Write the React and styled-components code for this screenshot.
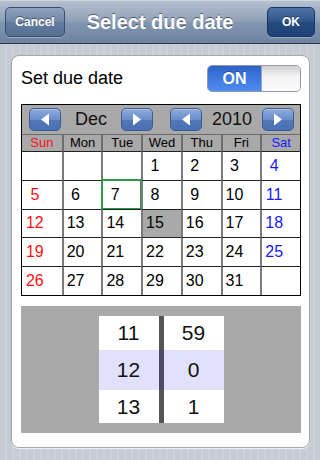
import React from "react";
import styled, { createGlobalStyle, css } from "styled-components";

const Global = createGlobalStyle`
  html, body { margin: 0; padding: 0; }
  body {
    width: 320px;
    height: 460px;
    overflow: hidden;
    font-family: "Liberation Sans", Arial, Helvetica, sans-serif;
    background: repeating-linear-gradient(90deg, #c5ccd4 0 5px, #cbd2d9 5px 7px);
  }
  * { box-sizing: border-box; }
`;

const Screen = styled.div`
  width: 320px;
  height: 460px;
  display: flex;
  flex-direction: column;
`;

const NavBar = styled.div`
  height: 44px;
  flex: none;
  display: flex;
  align-items: center;
  justify-content: space-between;
  padding: 0 5px;
  background: linear-gradient(#b5c0d0 0%, #8d9fb6 50%, #8297b0 50%, #6d83a1 100%);
  border-top: 1px solid #cdd5df;
  border-bottom: 1px solid #2d3642;
  position: relative;
`;

const NavButton = styled.button`
  height: 30px;
  padding: 0;
  width: ${(p) => p.$w}px;
  border-radius: 5px;
  border: 1px solid #3a4f6e;
  color: #fff;
  font-family: inherit;
  font-weight: bold;
  font-size: 12px;
  text-shadow: 0 -1px 0 rgba(0, 0, 0, 0.45);
  box-shadow: 0 1px 0 rgba(255, 255, 255, 0.3);
  background: ${(p) =>
    p.$primary
      ? "linear-gradient(#4f73a6 0%, #2f5489 50%, #234a80 50%, #1f4379 100%)"
      : "linear-gradient(#8fa2bb 0%, #6f86a6 50%, #627b9d 50%, #567096 100%)"};
  border-color: ${(p) => (p.$primary ? "#1c355b" : "#3a4f6e")};
`;

const Title = styled.div`
  position: absolute;
  left: 0;
  right: 0;
  top: 0;
  bottom: 0;
  display: flex;
  align-items: center;
  justify-content: center;
  pointer-events: none;
  color: #fff;
  font-weight: bold;
  font-size: 20px;
  text-shadow: 0 -1px 0 rgba(0, 0, 0, 0.5);
`;

const Content = styled.div`
  padding: 11px 10px 0 11px;
`;

const Panel = styled.div`
  width: 299px;
  height: 393px;
  background: #fff;
  border: 1px solid #a3a8ae;
  border-radius: 8px;
  box-shadow: 0 1px 1px rgba(255, 255, 255, 0.7), -1px 0 0 rgba(0, 0, 0, 0.05);
  padding: 9px 9px 0 9px;
  display: flex;
  flex-direction: column;
`;

const SettingRow = styled.div`
  height: 27px;
  display: flex;
  align-items: center;
  justify-content: space-between;
  margin-bottom: 12px;
`;

const Label = styled.span`
  font-size: 18px;
  color: #000;
`;

const Switch = styled.div`
  width: 94px;
  height: 27px;
  display: flex;
  border-radius: 5px;
  border: 1px solid #8e98a6;
  overflow: hidden;
  margin-right: -1px;
`;

const SwitchOn = styled.div`
  width: 54px;
  display: flex;
  align-items: center;
  justify-content: center;
  color: #fff;
  font-weight: bold;
  font-size: 16px;
  background: linear-gradient(#2d62c6 0%, #3e7ae2 50%, #4e8cf0 100%);
  border-right: 1px solid #9aa5b5;
  text-shadow: 0 -1px 0 rgba(0, 0, 0, 0.3);
`;

const SwitchKnob = styled.div`
  flex: 1;
  background: linear-gradient(#cfcfcf 0%, #f2f2f2 40%, #fcfcfc 100%);
  border-radius: 0 4px 4px 0;
`;

const Calendar = styled.div`
  width: 280px;
  border: 1px solid #000;
  display: flex;
  flex-direction: column;
`;

const CalHeader = styled.div`
  height: 30px;
  background: #a9a9a9;
  border-bottom: 1px solid #6a6a6a;
  display: flex;
  align-items: center;
  justify-content: space-between;
  padding: 0 6px 0 7px;
`;

const NavGroup = styled.div`
  display: flex;
  align-items: center;
`;

const ArrowBtn = styled.div`
  width: 32px;
  height: 23px;
  border-radius: 5px;
  border: 1px solid #3b5c96;
  background: linear-gradient(#8eabdc 0%, #6a8dca 50%, #5479bb 50%, #4a6fb0 100%);
  display: flex;
  align-items: center;
  justify-content: center;
  box-shadow: inset 0 1px 0 rgba(255, 255, 255, 0.3);
`;

const NavLabel = styled.div`
  width: 60px;
  text-align: center;
  font-size: 18px;
  color: #111;
`;

const DowRow = styled.div`
  height: 16px;
  display: grid;
  grid-template-columns: repeat(7, 1fr);
  background: #a9a9a9;
`;

const colorFor = (kind) =>
  kind === "sun" ? "#ff1010" : kind === "sat" ? "#1818ff" : "#000";

const DowCell = styled.div`
  font-size: 13px;
  line-height: 16px;
  text-align: center;
  color: ${(p) => colorFor(p.$kind)};
  ${(p) => !p.$first && css`border-left: 2px solid #6e6e6e;`}
`;

const Grid = styled.div`
  height: 144px;
  display: grid;
  grid-template-columns: repeat(7, 1fr);
  grid-template-rows: repeat(5, 1fr);
`;

const DayCell = styled.div`
  position: relative;
  border-top: 1px solid #222;
  ${(p) => !p.$first && css`border-left: 2px solid #7a7a7a;`}
  background: ${(p) => (p.$shaded ? "#a9a9a9" : "#fff")};
  display: flex;
  align-items: center;
  justify-content: center;
  padding-right: 14px;
  font-size: 16px;
  color: ${(p) => colorFor(p.$kind)};
  ${(p) =>
    p.$selected &&
    css`
      &::after {
        content: "";
        position: absolute;
        left: -2px;
        right: -1px;
        top: -2px;
        bottom: -1px;
        border: 2px solid #2a9c45;
      }
    `}
`;

const Picker = styled.div`
  margin-top: 10px;
  height: 127px;
  width: 280px;
  background: #a9a9a9;
  display: flex;
  justify-content: center;
  align-items: center;
`;

const Wheel = styled.div`
  display: flex;
`;

const WheelCol = styled.div`
  width: 60px;
  display: flex;
  flex-direction: column;
`;

const heights = [34, 40, 33];

const WheelItem = styled.div`
  height: ${(p) => p.$h}px;
  display: flex;
  align-items: center;
  justify-content: center;
  font-size: 21px;
  color: #111;
  background: ${(p) => (p.$active ? "#e1e1fd" : "#fff")};
`;

const Divider = styled.div`
  width: 5px;
  display: flex;
  flex-direction: column;
`;

const DividerSeg = styled.div`
  height: ${(p) => p.$h}px;
  background: ${(p) => (p.$active ? "#4b4a68" : "#555")};
`;

const Triangle = ({ dir }) => (
  <svg width="10" height="13" viewBox="0 0 10 13">
    {dir === "left" ? (
      <path d="M9 0.5 L9 12.5 L1 6.5 Z" fill="#fff" />
    ) : (
      <path d="M1 0.5 L1 12.5 L9 6.5 Z" fill="#fff" />
    )}
  </svg>
);

const dows = ["Sun", "Mon", "Tue", "Wed", "Thu", "Fri", "Sat"];

const buildDays = () => {
  const cells = [];
  for (let i = 0; i < 3; i++) cells.push(null);
  for (let d = 1; d <= 31; d++) cells.push(d);
  while (cells.length < 35) cells.push(null);
  return cells;
};

export default function App() {
  const days = buildDays();
  return (
    <Screen>
      <Global />
      <NavBar>
        <NavButton $w={60}>Cancel</NavButton>
        <Title>Select due date</Title>
        <NavButton $w={48} $primary>
          OK
        </NavButton>
      </NavBar>
      <Content>
        <Panel>
          <SettingRow>
            <Label>Set due date</Label>
            <Switch>
              <SwitchOn>ON</SwitchOn>
              <SwitchKnob />
            </Switch>
          </SettingRow>
          <Calendar>
            <CalHeader>
              <NavGroup>
                <ArrowBtn>
                  <Triangle dir="left" />
                </ArrowBtn>
                <NavLabel>Dec</NavLabel>
                <ArrowBtn>
                  <Triangle dir="right" />
                </ArrowBtn>
              </NavGroup>
              <NavGroup>
                <ArrowBtn>
                  <Triangle dir="left" />
                </ArrowBtn>
                <NavLabel>2010</NavLabel>
                <ArrowBtn>
                  <Triangle dir="right" />
                </ArrowBtn>
              </NavGroup>
            </CalHeader>
            <DowRow>
              {dows.map((d, i) => (
                <DowCell
                  key={d}
                  $first={i === 0}
                  $kind={i === 0 ? "sun" : i === 6 ? "sat" : ""}
                >
                  {d}
                </DowCell>
              ))}
            </DowRow>
            <Grid>
              {days.map((d, i) => {
                const col = i % 7;
                return (
                  <DayCell
                    key={i}
                    $first={col === 0}
                    $kind={col === 0 ? "sun" : col === 6 ? "sat" : ""}
                    $selected={d === 7}
                    $shaded={d === 15}
                  >
                    {d}
                  </DayCell>
                );
              })}
            </Grid>
          </Calendar>
          <Picker>
            <Wheel>
              <WheelCol>
                {["11", "12", "13"].map((v, i) => (
                  <WheelItem key={v} $h={heights[i]} $active={i === 1}>
                    {v}
                  </WheelItem>
                ))}
              </WheelCol>
              <Divider>
                {heights.map((h, i) => (
                  <DividerSeg key={i} $h={h} $active={i === 1} />
                ))}
              </Divider>
              <WheelCol>
                {["59", "0", "1"].map((v, i) => (
                  <WheelItem key={v} $h={heights[i]} $active={i === 1}>
                    {v}
                  </WheelItem>
                ))}
              </WheelCol>
            </Wheel>
          </Picker>
        </Panel>
      </Content>
    </Screen>
  );
}
